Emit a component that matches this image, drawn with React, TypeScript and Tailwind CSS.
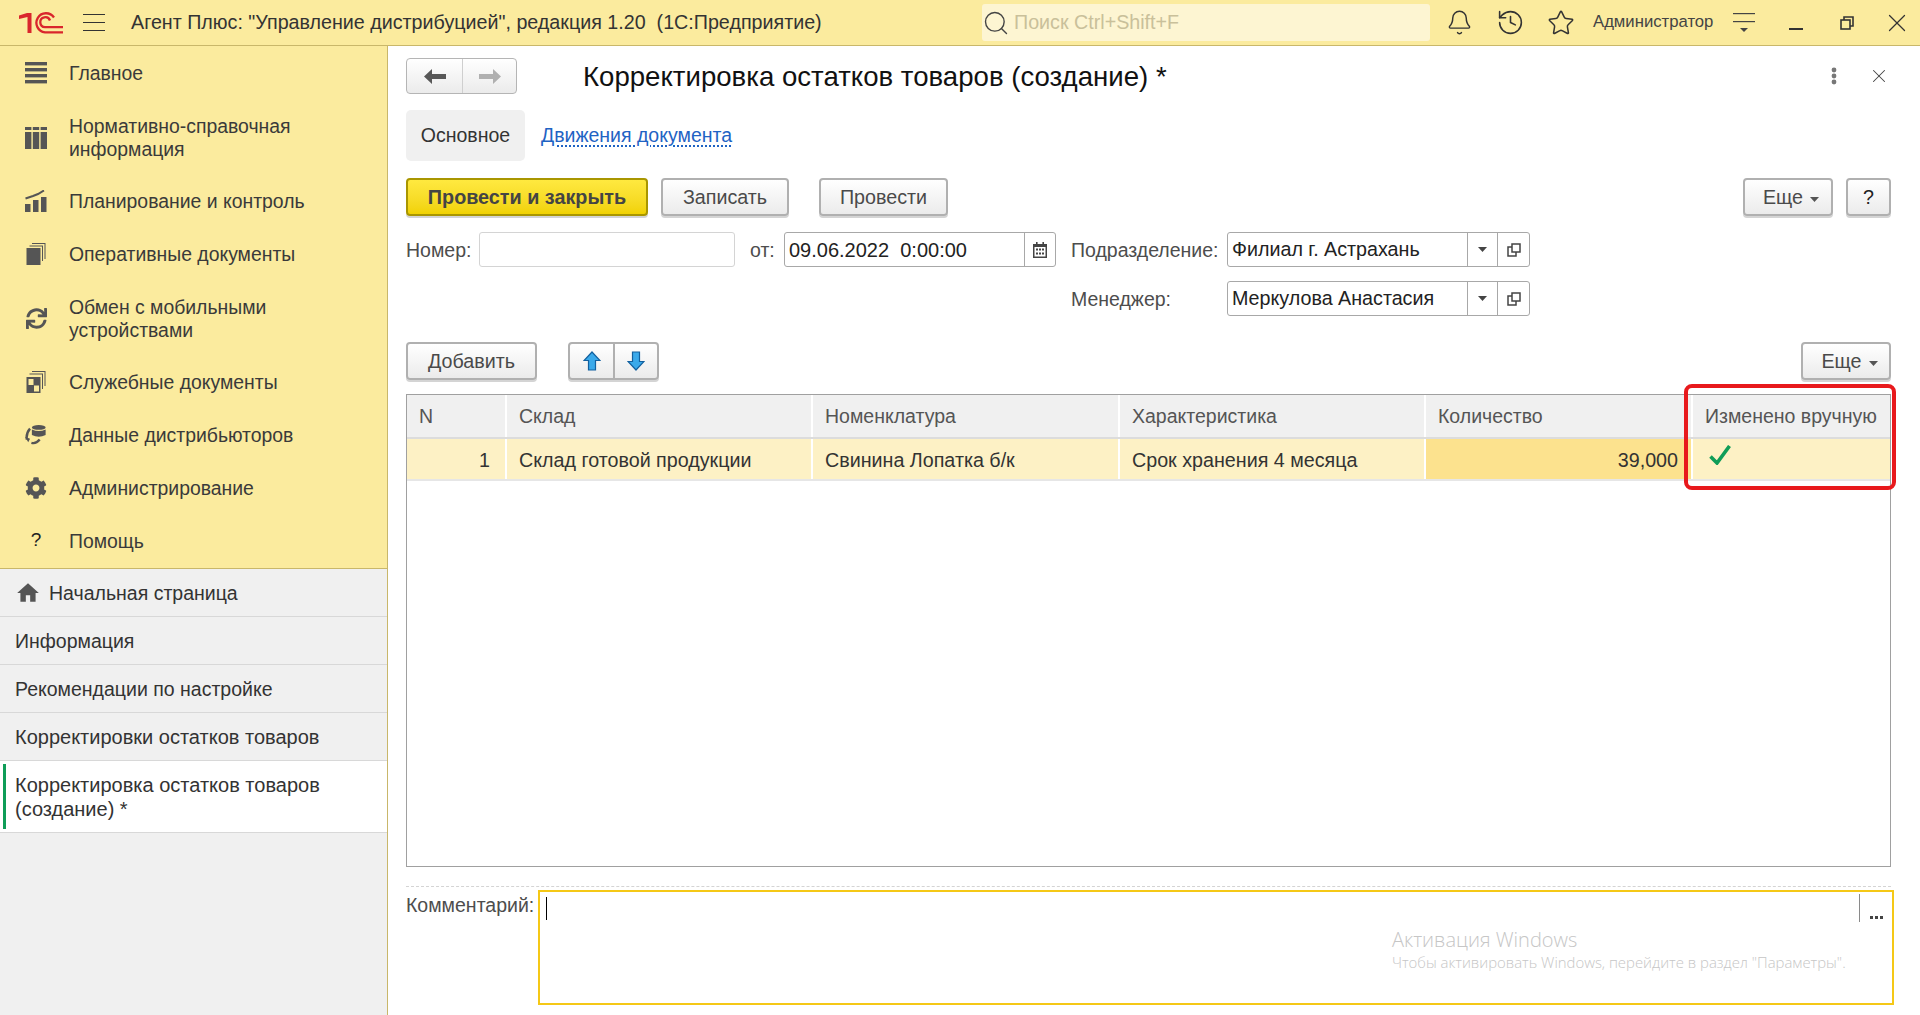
import { Bell, History, Star, Search, X } from 'lucide-react'
import { FaCog, FaSync } from 'react-icons/fa'
import { MdHome } from 'react-icons/md'
import type { ReactNode } from 'react'

const Logo = () => (
  <svg width="44" height="22" viewBox="0 0 44 22" fill="none" className="ml-[19px]">
    <path d="M0 3.5 L8 1 H12.5 V21 H8.5 V5 L0 7 Z" fill="#d9262c" />
    <path d="M35 5.5 A9.6 9.6 0 1 0 26 20.4 H44" stroke="#d9262c" strokeWidth="2.3" />
    <path d="M31 8.5 A5 5 0 1 0 26 15.2 H44" stroke="#d9262c" strokeWidth="2.3" />
  </svg>
)

const MenuIcon = ({ type }: { type: string }) => {
  const c = '#555'
  if (type === 'main')
    return (
      <svg width="22" height="22" viewBox="0 0 22 22" fill={c}>
        <rect x="0" y="0" width="22" height="3.4" />
        <rect x="0" y="6" width="22" height="3.4" />
        <rect x="0" y="12" width="22" height="3.4" />
        <rect x="0" y="18" width="22" height="3.4" />
      </svg>
    )
  if (type === 'nsi')
    return (
      <svg width="22" height="22" viewBox="0 0 22 22" fill={c}>
        <rect x="0" y="0" width="6.4" height="3" />
        <rect x="7.8" y="0" width="6.4" height="3" />
        <rect x="15.6" y="0" width="6.4" height="3" />
        <rect x="0" y="5" width="6.4" height="17" />
        <rect x="7.8" y="5" width="6.4" height="17" />
        <rect x="15.6" y="5" width="6.4" height="17" />
      </svg>
    )
  if (type === 'plan')
    return (
      <svg width="22" height="22" viewBox="0 0 22 22" fill={c}>
        <rect x="0" y="14" width="5.5" height="8" />
        <rect x="8" y="10" width="5.5" height="12" />
        <rect x="16" y="7" width="5.5" height="15" />
        <path d="M0.5 8.5 L8 6 L13 4 L19 0.5" stroke={c} strokeWidth="2" fill="none" />
      </svg>
    )
  if (type === 'docs')
    return (
      <svg width="20" height="22" viewBox="0 0 20 22" fill={c}>
        <path d="M6 0 H19.5 V16 H18.5 V1 H6 Z" />
        <path d="M3.5 2.5 H17 V18 H16 V3.5 H3.5 Z" />
        <rect x="0.5" y="5" width="14" height="17" />
      </svg>
    )
  if (type === 'sync') return <FaSync size={21} color={c} />
  if (type === 'service')
    return (
      <svg width="20" height="22" viewBox="0 0 20 22" fill={c}>
        <path d="M6 0 H19.5 V15 H18.5 V1 H6 Z" />
        <path d="M3.5 2.5 H17 V18 H16 V3.5 H3.5 Z" />
        <rect x="0.5" y="6" width="14" height="16" />
        <rect x="2.5" y="8" width="5" height="6" fill="#fbeb9e" />
        <rect x="8" y="14.5" width="5" height="6" fill="#fbeb9e" />
      </svg>
    )
  if (type === 'dist')
    return (
      <svg width="24" height="22" viewBox="0 0 24 22" fill="none">
        <ellipse cx="15" cy="2.8" rx="7.5" ry="2.6" fill={c} />
        <path d="M7.5 5 Q15 8.5 22.5 5 V11 Q15 15 7.5 11 Z" fill={c} />
        <path d="M5.5 4 Q1 9 2 16" stroke={c} strokeWidth="2.6" />
        <path d="M0 13 L5.5 15 L3.5 19 Z" fill={c} />
        <path d="M7 19.5 Q12 21 16 16" stroke={c} strokeWidth="2.6" />
      </svg>
    )
  if (type === 'gear') return <FaCog size={22} color={c} />
  return <span className="block w-[22px] text-center text-[19px] text-[#222]">?</span>
}

const menu: { icon: string; lines: string[] }[] = [
  { icon: 'main', lines: ['Главное'] },
  { icon: 'nsi', lines: ['Нормативно-справочная', 'информация'] },
  { icon: 'plan', lines: ['Планирование и контроль'] },
  { icon: 'docs', lines: ['Оперативные документы'] },
  { icon: 'sync', lines: ['Обмен с мобильными', 'устройствами'] },
  { icon: 'service', lines: ['Служебные документы'] },
  { icon: 'dist', lines: ['Данные дистрибьюторов'] },
  { icon: 'gear', lines: ['Администрирование'] },
  { icon: 'help', lines: ['Помощь'] },
]

const Btn = ({ children, className = '' }: { children: ReactNode; className?: string }) => (
  <div
    className={`flex items-center justify-center h-[38px] pt-px border-2 border-[#b0b0b0] rounded-[4px] bg-linear-to-b from-white to-[#ebebeb] shadow-[0_2px_0_#d4d4d4] text-[19.7px] text-[#4a4a4a] ${className}`}
  >
    {children}
  </div>
)

const Caret = () => (
  <svg width="9" height="5" viewBox="0 0 9 5" className="ml-[7px] mt-[3px]" fill="#555">
    <path d="M0 0 H9 L4.5 5 Z" />
  </svg>
)

const OpenIcon = () => (
  <svg width="14" height="14" viewBox="0 0 14 14" fill="none" stroke="#444" strokeWidth="1.5">
    <rect x="5" y="1" width="8" height="8" />
    <path d="M5 4 H1 V13 H9 V9" />
  </svg>
)

const SelectField = ({ value }: { value: string }) => (
  <div className="flex items-center w-[303px] h-[35px] border border-[#a8a8a8] rounded-[3px] text-[19.7px] text-[#222]">
    <div className="flex-1 pl-[4px] whitespace-nowrap">{value}</div>
    <div className="flex items-center justify-center w-[30px] h-full border-l border-[#a8a8a8]">
      <svg width="9" height="5" viewBox="0 0 9 5" fill="#444">
        <path d="M0 0 H9 L4.5 5 Z" />
      </svg>
    </div>
    <div className="flex items-center justify-center w-[32px] h-full border-l border-[#a8a8a8]">
      <OpenIcon />
    </div>
  </div>
)

const columns = ['N', 'Склад', 'Номенклатура', 'Характеристика', 'Количество', 'Изменено вручную']
const gridCols = 'grid grid-cols-[100px_306px_307px_306px_267px_197px]'

export default function App() {
  return (
    <div className="flex flex-col w-[1920px] h-[1015px] overflow-hidden bg-white font-['Liberation_Sans',Arial,sans-serif] text-[#333]">
      {/* шапка */}
      <header className="flex items-center shrink-0 h-[46px] bg-[#fbeb9e] border-b border-[#c9b76a]">
        <Logo />
        <div className="flex flex-col justify-between ml-[20px] w-[22px] h-[17px]">
          <div className="h-px bg-[#333]" />
          <div className="h-px bg-[#333]" />
          <div className="h-px bg-[#333]" />
        </div>
        <div className="ml-[26px] w-[851px] text-[19.7px] text-[#333] whitespace-pre">
          {'Агент Плюс: "Управление дистрибуцией", редакция 1.20  (1С:Предприятие)'}
        </div>
        <div className="flex items-center w-[448px] h-[37px] rounded-[3px] bg-[#fdf5d2]">
          <Search size={28} strokeWidth={1.2} color="#444" />
          <span className="ml-[4px] text-[19.7px] text-[#c9c09a]">Поиск Ctrl+Shift+F</span>
        </div>
        <Bell size={27} strokeWidth={1.3} color="#333" className="ml-[16px]" />
        <History size={29} strokeWidth={1.3} color="#333" className="ml-[23px]" />
        <Star size={28} strokeWidth={1.3} color="#333" className="ml-[22px]" />
        <span className="ml-[18px] w-[120px] text-[16.7px] text-[#444] whitespace-nowrap -translate-y-px">Администратор</span>
        <svg width="22" height="20" viewBox="0 0 22 20" className="ml-[20px]" fill="#444">
          <rect x="0" y="0" width="22" height="1.2" />
          <rect x="0" y="8" width="22" height="1.2" />
          <path d="M7 15 H15 L11 19 Z" />
        </svg>
        <div className="ml-[34px] w-[14px] h-[2px] mt-[13px] bg-[#333]" />
        <svg width="14" height="14" viewBox="0 0 14 14" className="ml-[37px]" fill="none" stroke="#333" strokeWidth="1.6">
          <rect x="1" y="4" width="9" height="9" />
          <path d="M4 4 V1 H13 V10 H10" />
        </svg>
        <X size={30} strokeWidth={1} color="#333" className="ml-[28px] shrink-0" />
      </header>

      <div className="flex flex-1 min-h-0">
        {/* левая панель */}
        <aside className="flex flex-col shrink-0 w-[388px] border-r border-[#c9b76a] bg-[#f0f0f0]">
          <nav className="bg-[#fbeb9e] h-[523px] border-b border-[#c9b76a]">
            {menu.map((item) => (
              <div
                key={item.lines[0]}
                className={`flex items-center ${item.lines.length > 1 ? 'h-[75px] pt-[2px]' : 'h-[53px]'}`}
              >
                <div className="flex justify-center w-[22px] ml-[25px] shrink-0">
                  <MenuIcon type={item.icon} />
                </div>
                <div className="ml-[22px] pt-px text-[19.4px] leading-[23px] text-[#3a3a3a]">
                  {item.lines.map((l) => (
                    <div key={l}>{l}</div>
                  ))}
                </div>
              </div>
            ))}
          </nav>
          <div className="text-[19.5px] leading-[24px] text-[#333]">
            <div className="flex items-center h-[48px] pl-[15px] border-b border-[#d8d8d8]">
              <MdHome size={26} color="#555" />
              <span className="ml-[8px]">Начальная страница</span>
            </div>
            <div className="flex items-center h-[48px] pl-[15px] border-b border-[#d8d8d8]">Информация</div>
            <div className="flex items-center h-[48px] pl-[15px] border-b border-[#d8d8d8]">Рекомендации по настройке</div>
            <div className="flex items-center h-[48px] pl-[15px] border-b border-[#d8d8d8] text-[20px]">Корректировки остатков товаров</div>
            <div className="flex items-center h-[72px] bg-white border-b border-[#d8d8d8] pl-[3px] text-[20px]">
              <div className="w-[3px] h-[65px] bg-[#0f9d58]" />
              <div className="ml-[9px]">
                <div>Корректировка остатков товаров</div>
                <div>(создание) *</div>
              </div>
            </div>
          </div>
        </aside>

        {/* форма */}
        <main className="flex flex-col flex-1 min-w-0 pl-[18px] pr-[29px]">
          <div className="flex items-center mt-[12px] h-[36px]">
            <div className="flex w-[111px] h-[36px] border border-[#b5b5b5] rounded-[4px] bg-linear-to-b from-white to-[#ebebeb]">
              <div className="flex items-center justify-center w-[56px] border-r border-[#cfcfcf]">
                <svg width="22" height="15" viewBox="0 0 22 15" fill="#585858">
                  <path d="M0 7.5 L8 0 V5 H22 V10 H8 V15 Z" />
                </svg>
              </div>
              <div className="flex items-center justify-center flex-1">
                <svg width="22" height="15" viewBox="0 0 22 15" fill="#b0b0b0">
                  <path d="M22 7.5 L14 0 V5 H0 V10 H14 V15 Z" />
                </svg>
              </div>
            </div>
            <h1 className="ml-[66px] pt-px text-[27.6px] text-[#111] whitespace-nowrap">Корректировка остатков товаров (создание) *</h1>
            <svg width="6" height="18" viewBox="0 0 6 18" fill="#777" className="ml-auto mr-[31px]">
              <circle cx="3" cy="3" r="2.4" />
              <circle cx="3" cy="9" r="2.4" />
              <circle cx="3" cy="15" r="2.4" />
            </svg>
            <X size={22} strokeWidth={1.1} color="#444" className="mr-px" />
          </div>

          <div className="flex items-center mt-[16px] h-[51px]">
            <div className="flex items-center justify-center w-[119px] h-full pt-px rounded-[5px] bg-[#f0f0f0] text-[19.5px] text-[#333]">Основное</div>
            <span className="ml-[16px] pt-px text-[19.5px] text-[#1f63c4] underline decoration-dotted underline-offset-[3px]">Движения документа</span>
          </div>

          <div className="flex items-center mt-[17px]">
            <div className="flex items-center justify-center w-[242px] h-[38px] pt-px border-2 border-[#a99600] rounded-[4px] bg-linear-to-b from-[#ffe93f] to-[#f1d200] shadow-[0_2px_0_#d4d4d4] text-[19.8px] font-bold text-[#444]">
              Провести и закрыть
            </div>
            <Btn className="ml-[13px] w-[128px]">Записать</Btn>
            <Btn className="ml-[30px] w-[129px]">Провести</Btn>
            <Btn className="ml-auto w-[90px] pl-[6px]">
              Еще
              <Caret />
            </Btn>
            <Btn className="ml-[13px] w-[45px] text-[#222]">?</Btn>
          </div>

          <div className="flex items-center mt-[16px] h-[35px] text-[19.5px] text-[#4d4d4d]">
            <span className="w-[73px] pt-[3px]">Номер:</span>
            <div className="w-[256px] h-full border border-[#d4d4d4] rounded-[3px]" />
            <span className="w-[49px] pl-[15px] pt-[3px]">от:</span>
            <div className="flex items-center w-[272px] h-full border border-[#a8a8a8] rounded-[3px] text-[#222]">
              <span className="flex-1 pl-[4px] text-[20px] whitespace-pre">09.06.2022  0:00:00</span>
              <div className="flex items-center justify-center w-[31px] h-full border-l border-[#a8a8a8]">
                <svg width="14" height="16" viewBox="0 0 14 16" fill="#444">
                  <path d="M3 0 H4.6 V2 H9.4 V0 H11 V2 H14 V16 H0 V2 H3 Z" />
                  <rect x="1.5" y="5" width="11" height="9.5" fill="#fff" />
                  <rect x="3" y="6.5" width="2" height="2" />
                  <rect x="6" y="6.5" width="2" height="2" />
                  <rect x="9" y="6.5" width="2" height="2" />
                  <rect x="3" y="10.5" width="2" height="2" />
                  <rect x="6" y="10.5" width="2" height="2" />
                  <rect x="9" y="10.5" width="2" height="2" />
                </svg>
              </div>
            </div>
            <span className="w-[171px] pl-[15px] pt-[3px] whitespace-nowrap">Подразделение:</span>
            <SelectField value="Филиал г. Астрахань" />
          </div>

          <div className="flex items-center mt-[14px] h-[35px] pl-[665px] text-[19.5px] text-[#4d4d4d]">
            <span className="w-[156px] pt-[3px]">Менеджер:</span>
            <SelectField value="Меркулова Анастасия" />
          </div>

          <div className="flex items-center mt-[26px]">
            <Btn className="w-[131px]">Добавить</Btn>
            <div className="flex ml-[31px] w-[91px] h-[38px] border-2 border-[#b0b0b0] rounded-[4px] bg-linear-to-b from-white to-[#ebebeb] shadow-[0_2px_0_#d4d4d4]">
              <div className="flex items-center justify-center w-[45px] border-r-2 border-[#b0b0b0]">
                <svg width="18" height="20" viewBox="0 0 18 20" fill="#3aa9ea" stroke="#12609f" strokeWidth="1.2">
                  <path d="M9 1 L17 9.5 H12.5 V19 H5.5 V9.5 H1 Z" />
                </svg>
              </div>
              <div className="flex items-center justify-center flex-1">
                <svg width="18" height="20" viewBox="0 0 18 20" fill="#3aa9ea" stroke="#12609f" strokeWidth="1.2">
                  <path d="M9 19 L17 10.5 H12.5 V1 H5.5 V10.5 H1 Z" />
                </svg>
              </div>
            </div>
            <Btn className="ml-auto w-[90px] pl-[7px]">
              Еще
              <Caret />
            </Btn>
          </div>

          {/* таблица */}
          <div className="relative mt-[14px] h-[473px] border border-[#a0a0a0] text-[19.7px]">
            <div className={`${gridCols} h-[44px] bg-[#f0f0f0] border-b-2 border-[#dcdcdc]`}>
              {columns.map((c) => (
                <div key={c} className="flex items-center pl-[12px] pt-px border-r-2 border-white last:border-r-0 text-[#555] text-[19.5px] whitespace-nowrap">
                  {c}
                </div>
              ))}
            </div>
            <div className={`${gridCols} h-[42px] bg-[#fdf1c5] border-b-2 border-[#e6e6e6] text-[#333]`}>
              <div className="flex items-center justify-end pt-[4px] pr-[15px] border-r-2 border-white">1</div>
              <div className="flex items-center pt-[4px] pl-[12px] border-r-2 border-white">Склад готовой продукции</div>
              <div className="flex items-center pt-[4px] pl-[12px] border-r-2 border-white">Свинина Лопатка б/к</div>
              <div className="flex items-center pt-[4px] pl-[12px] border-r-2 border-white">Срок хранения 4 месяца</div>
              <div className="flex items-center justify-end pt-[4px] pr-[13px] border-r-2 border-white bg-[#fce28e]">39,000</div>
              <div className="pl-[16px] pt-[6px]">
                <svg width="22" height="20" viewBox="0 0 22 20" fill="none" stroke="#0f9d58" strokeWidth="3.6">
                  <path d="M1.5 11.5 L8 18 L20.5 1" />
                </svg>
              </div>
            </div>
            <div className="absolute left-[1277px] top-[-11px] w-[212px] h-[106px] border-4 border-[#e8191c] rounded-[8px]" />
          </div>

          <div className="mt-[19px] border-t border-dashed border-[#d4d4d4]" />

          <div className="flex mt-[3px] h-[115px]">
            <span className="w-[132px] shrink-0 pt-px text-[19.5px] text-[#4d4d4d] whitespace-nowrap">Комментарий:</span>
            <div className="relative flex justify-between flex-1 -mr-[3px] h-full border-[2px] border-[#f5c816]">
              <div className="ml-[6px] mt-[5px] w-px h-[23px] bg-black" />
              <div className="flex items-end justify-center w-[33px] h-[28px] mt-[2px] border-l border-[#8a8a8a] pb-[3px]">
                <svg width="13" height="3" viewBox="0 0 13 3" fill="#444">
                  <rect x="0" y="0" width="3" height="3" />
                  <rect x="5" y="0" width="3" height="3" />
                  <rect x="10" y="0" width="3" height="3" />
                </svg>
              </div>
              <div className="absolute left-[852px] top-[36px] font-['Open_Sans',sans-serif] font-light text-[#c6c6c6]">
                <div className="text-[20px] leading-[24px]">Активация Windows</div>
                <div className="text-[14.9px] leading-[20px] whitespace-nowrap">Чтобы активировать Windows, перейдите в раздел "Параметры".</div>
              </div>
            </div>
          </div>
        </main>
      </div>
    </div>
  )
}
